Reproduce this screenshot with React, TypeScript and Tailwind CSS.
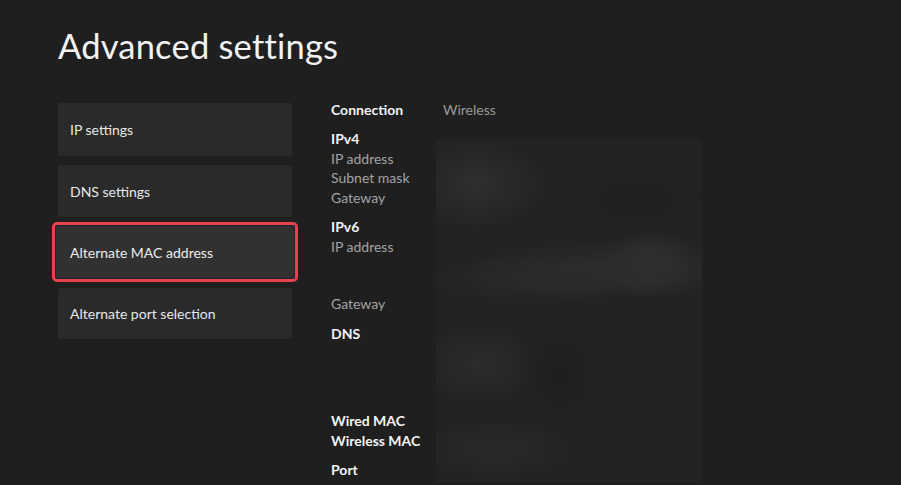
import React from "react";

const font = { fontFamily: "Lato, 'Noto Sans', sans-serif" };

export default function App() {
  return (
    <div
      className="relative h-[485px] w-[901px] overflow-hidden bg-[#1f1f1f] text-white"
      style={font}
    >
      <h1 className="pl-[58px] pt-[26px] text-[34.5px] font-normal leading-[40px] tracking-[0.2px] text-[#f2f2f2]">
        Advanced settings
      </h1>
      <div className="flex">
        {/* left menu */}
        <div className="ml-[52px] flex w-[246px] flex-col">
          <div className="mx-[6px] mt-[37px] flex h-[53px] items-center rounded-[2px] bg-[#2a2a2a] pl-[12px] text-[14px] text-[#e8e8e8]">
            IP settings
          </div>
          <div className="mx-[6px] mt-[9px] flex h-[52px] items-center rounded-[2px] bg-[#2a2a2a] pl-[12px] text-[14px] text-[#e8e8e8]">
            DNS settings
          </div>
          <div className="mt-[5px] h-[60px] rounded-[5px] border-[3px] border-[#e8434b] bg-[#172036] p-[1px]">
            <div className="flex h-full items-center rounded-[2px] bg-[#313131] pl-[14px] text-[14px] text-[#ececec]">
              Alternate MAC address
            </div>
          </div>
          <div className="mx-[6px] mt-[6px] flex h-[51px] items-center rounded-[2px] bg-[#2a2a2a] pl-[12px] text-[14px] text-[#e8e8e8]">
            Alternate port selection
          </div>
        </div>

        {/* right details */}
        <div className="ml-[33px] flex flex-col">
          <div className="mt-[33px] flex h-[20px] items-center text-[14px]">
            <span className="w-[112px] font-bold text-[#f2f2f2]">Connection</span>
            <span className="text-[#9a9a9a]">Wireless</span>
          </div>
          <div className="mt-[10px] flex">
            <div className="flex w-[105px] flex-col text-[14px] leading-[19.5px]">
              <span className="font-bold text-[#f4f4f4]">IPv4</span>
              <span className="text-[#a3a3a3]">IP address</span>
              <span className="text-[#a3a3a3]">Subnet mask</span>
              <span className="text-[#a3a3a3]">Gateway</span>
              <span className="mt-[10px] font-bold text-[#f4f4f4]">IPv6</span>
              <span className="text-[#a3a3a3]">IP address</span>
              <span className="mt-[38px] text-[#a3a3a3]">Gateway</span>
              <span className="mt-[10px] font-bold text-[#f4f4f4]">DNS</span>
              <span className="mt-[68px] font-bold text-[#f4f4f4]">Wired MAC</span>
              <span className="font-bold text-[#f4f4f4]">Wireless MAC</span>
              <span className="mt-[10px] font-bold text-[#f4f4f4]">Port</span>
            </div>
            <div className="mt-[10px] h-[343px] w-[266px] bg-[#232323] bg-[radial-gradient(ellipse_70px_45px_at_40px_45px,#2f2f2f,transparent),radial-gradient(ellipse_150px_30px_at_180px_130px,#2d2d2d,transparent),radial-gradient(ellipse_50px_35px_at_215px_125px,#343434,transparent),radial-gradient(ellipse_120px_25px_at_110px_140px,#2b2b2b,transparent),radial-gradient(ellipse_60px_40px_at_45px_225px,#2c2c2c,transparent),radial-gradient(ellipse_50px_60px_at_125px_235px,#1f1f1f,transparent),radial-gradient(ellipse_80px_30px_at_60px_310px,#2a2a2a,transparent),radial-gradient(ellipse_100px_50px_at_200px_60px,#1f201f,transparent)]" />
          </div>
        </div>
      </div>
    </div>
  );
}
